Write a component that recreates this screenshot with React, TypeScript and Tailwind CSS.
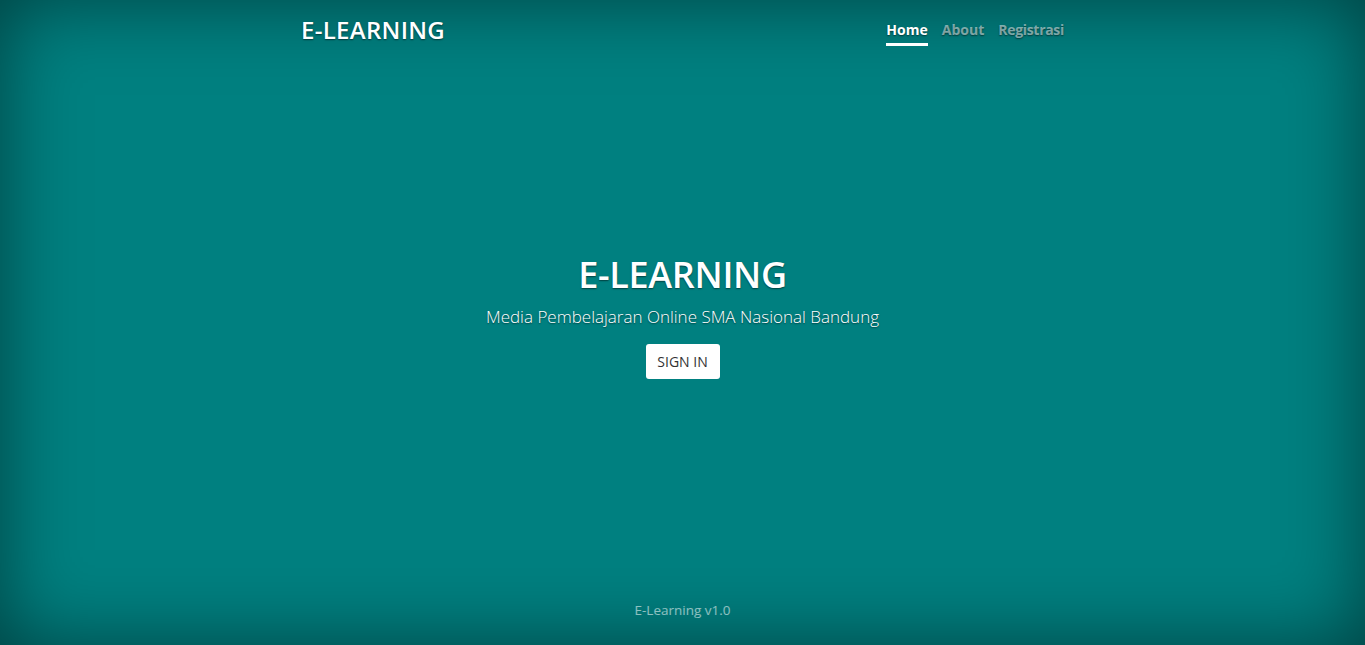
export default function App() {
  const shadow = "[text-shadow:0_0.05rem_0.1rem_rgba(0,0,0,0.5)]";
  return (
    <div
      className="flex h-screen w-full bg-[#008080] text-white shadow-[inset_0_0_5rem_rgba(0,0,0,0.5)]"
      style={{ fontFamily: '"Open Sans", "Noto Sans", sans-serif' }}
    >
      <div className="mx-auto flex h-full w-[795px] flex-col px-4 pt-3 pb-[25px]">
        <header className="flex items-start justify-between">
          <h3 className={`text-[24px] font-semibold leading-[36px] tracking-[0.3px] ${shadow}`}>
            E-LEARNING
          </h3>
          <nav className="mt-[7px] flex gap-[14px] text-[14px] font-bold">
            <a className={`border-b-[3px] border-white pb-[3px] text-white ${shadow}`}>Home</a>
            <a className={`border-b-[3px] border-transparent pb-[3px] text-white/50 ${shadow}`}>About</a>
            <a className={`border-b-[3px] border-transparent pb-[3px] tracking-[-0.3px] text-white/50 ${shadow}`}>Registrasi</a>
          </nav>
        </header>
        <main className="flex flex-1 flex-col items-center justify-center pb-[17px] text-center">
          <h1 className={`text-[36px] font-semibold leading-[48px] tracking-[-0.3px] ${shadow}`}>E-LEARNING</h1>
          <p className={`mt-[5px] text-[17px] font-light leading-[26px] ${shadow}`}>
            Media Pembelajaran Online SMA Nasional Bandung
          </p>
          <button className="mt-[14px] flex h-[35px] w-[74px] items-center justify-center rounded-[3px] bg-white text-[14px] text-[#333]">
            SIGN IN
          </button>
        </main>
        <footer className="text-center text-[13.5px] text-white/55">E-Learning v1.0</footer>
      </div>
    </div>
  );
}
